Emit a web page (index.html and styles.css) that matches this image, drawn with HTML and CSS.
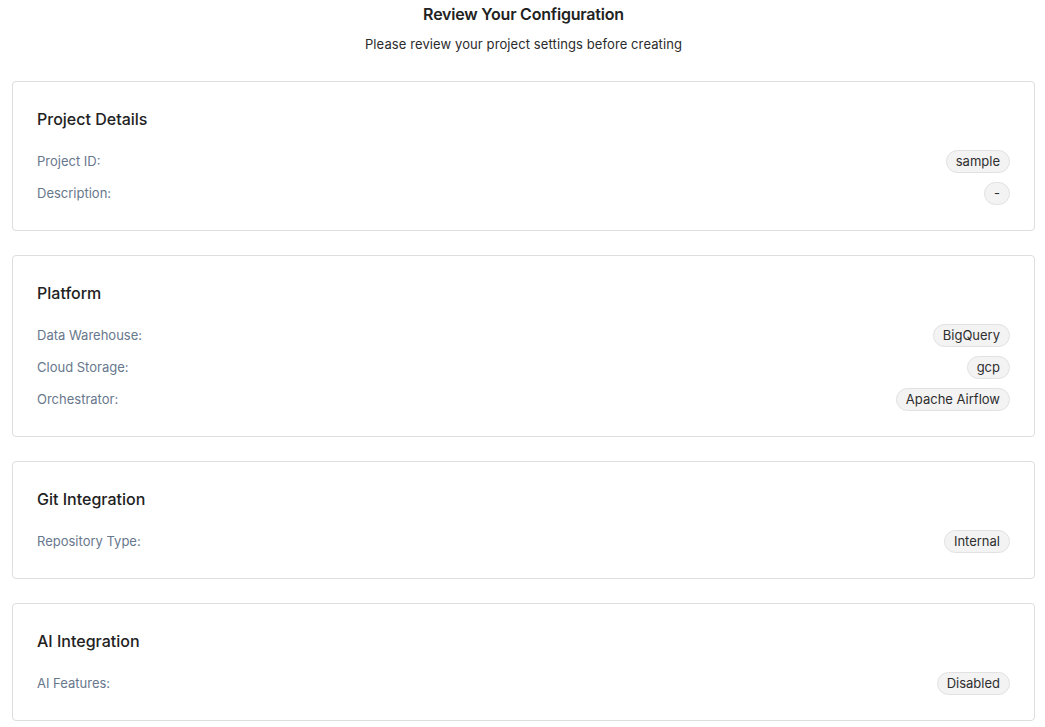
FILE: index.html
```html
<!DOCTYPE html>
<html lang="en">
<head>
<meta charset="utf-8">
<title>Review Your Configuration</title>
<link rel="stylesheet" href="styles.css">
</head>
<body>
<main class="review">
  <header class="review-header">
    <h1 class="review-title">Review Your Configuration</h1>
    <p class="review-subtitle">Please review your project settings before creating</p>
  </header>

  <section class="card">
    <h2 class="card-title">Project Details</h2>
    <div class="rows">
      <div class="row"><span class="label">Project ID:</span><span class="badge">sample</span></div>
      <div class="row"><span class="label">Description:</span><span class="badge">-</span></div>
    </div>
  </section>

  <section class="card">
    <h2 class="card-title">Platform</h2>
    <div class="rows">
      <div class="row"><span class="label">Data Warehouse:</span><span class="badge">BigQuery</span></div>
      <div class="row"><span class="label">Cloud Storage:</span><span class="badge">gcp</span></div>
      <div class="row"><span class="label">Orchestrator:</span><span class="badge">Apache Airflow</span></div>
    </div>
  </section>

  <section class="card">
    <h2 class="card-title">Git Integration</h2>
    <div class="rows">
      <div class="row"><span class="label">Repository Type:</span><span class="badge">Internal</span></div>
    </div>
  </section>

  <section class="card">
    <h2 class="card-title">AI Integration</h2>
    <div class="rows">
      <div class="row"><span class="label">AI Features:</span><span class="badge">Disabled</span></div>
    </div>
  </section>
</main>
</body>
</html>
```

FILE: styles.css
```css
* { box-sizing: border-box; }

body {
  margin: 0;
  background: #ffffff;
  font-family: "Inter", "Liberation Sans", sans-serif;
  color: #1f2328;
}

.review {
  padding: 4px 10px 0 12px;
  display: flex;
  flex-direction: column;
  gap: 24px;
}

.review-header {
  text-align: center;
  display: flex;
  flex-direction: column;
  gap: 10px;
  margin-bottom: 3px;
}

.review-title {
  margin: 0;
  font-size: 16px;
  line-height: 20px;
  font-weight: 600;
  letter-spacing: -0.2px;
  color: #222;
}

.review-subtitle {
  margin: 0;
  font-size: 13px;
  line-height: 20px;
  letter-spacing: 0.1px;
  color: #2b2b2b;
}

.card {
  border: 1px solid #dedede;
  border-radius: 4px;
  padding: 24px 24px 26px 24px;
  background: #fff;
}

.card-title {
  margin: 0 0 18px;
  font-size: 16px;
  line-height: 26px;
  font-weight: 500;
  color: #222;
}

.rows {
  display: flex;
  flex-direction: column;
  gap: 10px;
}

.row {
  display: flex;
  justify-content: space-between;
  align-items: center;
  height: 22px;
}

.label {
  font-size: 13px;
  color: #67778c;
}

.badge {
  display: inline-flex;
  align-items: center;
  height: 23px;
  padding: 0 9px;
  border: 1px solid #e1e1e1;
  border-radius: 999px;
  background: #f3f3f3;
  font-size: 13px;
  color: #2e2e2e;
}
```
